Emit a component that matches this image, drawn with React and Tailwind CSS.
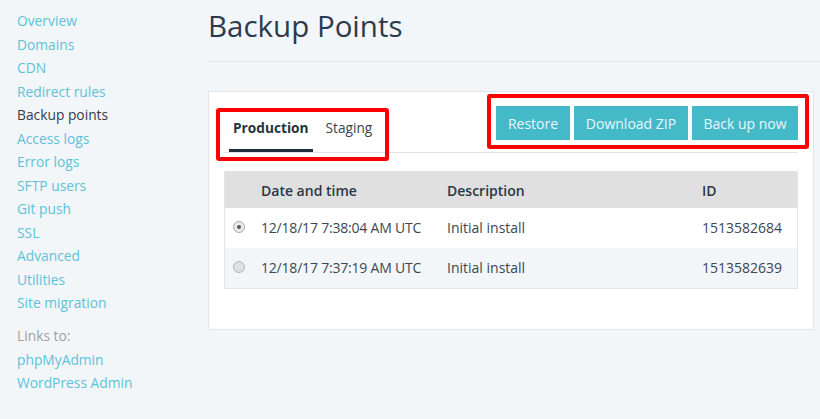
import React from "react";

const links = [
  "Overview",
  "Domains",
  "CDN",
  "Redirect rules",
  "Backup points",
  "Access logs",
  "Error logs",
  "SFTP users",
  "Git push",
  "SSL",
  "Advanced",
  "Utilities",
  "Site migration",
];

function Radio({ checked }) {
  return (
    <span
      className={
        "inline-flex h-[12px] w-[12px] items-center justify-center rounded-full border " +
        (checked
          ? "border-[#a9a9a9] bg-[#e9e9e9]"
          : "border-[#b4b4b4] bg-[#e0e0e0]")
      }
    >
      {checked && <span className="h-[4px] w-[4px] rounded-full bg-[#555]" />}
    </span>
  );
}

export default function App() {
  return (
    <div
      className="flex h-[419px] w-[820px] overflow-hidden bg-[#f3f6f9]"
      style={{ fontFamily: '"Open Sans", "Liberation Sans", sans-serif' }}
    >
      {/* Sidebar */}
      <aside className="w-[208px] shrink-0 pl-[17px] pt-[9px] text-[13.8px] leading-[23.5px]">
        {links.map((l) => (
          <div
            key={l}
            className={l === "Backup points" ? "text-[#333d48]" : "text-[#5cc2d8]"}
          >
            {l}
          </div>
        ))}
        <div className="mt-[9.5px] text-[#a0a0a0]">Links to:</div>
        <div className="text-[#5cc2d8]">phpMyAdmin</div>
        <div className="text-[#5cc2d8]">WordPress Admin</div>
      </aside>

      {/* Main */}
      <main className="flex-1">
        <h1 className="pt-[8px] text-[29.5px] leading-[36px] font-normal text-[#2b3b4c]">
          Backup Points
        </h1>
        <div className="mt-[17px] h-px bg-[#e1e4e7]" />

        <div className="relative mr-[6px] mt-[29px] h-[239px] border border-[#e1e5e8] bg-white px-[15px] pt-[14px]">
          {/* tabs + buttons */}
          <div className="flex items-end justify-between border-b border-[#e3e3e3]">
            <div className="flex pl-[5px]">
              <div className="border-b-[3px] border-[#1f2e38] px-[4px] pb-[11px] text-[13.7px] leading-[20px] font-bold text-[#253441]">
                Production
              </div>
              <div className="ml-[9px] px-[4px] pb-[14px] text-[13.7px] leading-[20px] text-[#3b4650]">
                Staging
              </div>
            </div>
            <div className="mb-[12px] flex gap-[4px]">
              <button className="h-[34px] w-[74px] bg-[#44bac9] text-[14px] text-[#e8f7f9]">
                Restore
              </button>
              <button className="h-[34px] w-[114px] bg-[#44bac9] text-[14px] text-[#e8f7f9]">
                Download ZIP
              </button>
              <button className="h-[34px] w-[106px] bg-[#44bac9] text-[14px] text-[#e8f7f9]">
                Back up now
              </button>
            </div>
          </div>

          {/* table */}
          <div className="mt-[18px] border border-[#e3e6e9] text-[14px]">
            <div className="grid h-[36px] grid-cols-[36px_186px_255px_1fr] items-center bg-[#e0e0e0] font-semibold text-[#2a3845]">
              <div />
              <div>Date and time</div>
              <div>Description</div>
              <div>ID</div>
            </div>
            <div className="grid h-[40px] grid-cols-[36px_186px_255px_1fr] items-center bg-white pb-[2px] text-[#3a4754]">
              <div className="flex pl-[8px]">
                <Radio checked />
              </div>
              <div className="tracking-[-0.2px]">12/18/17 7:38:04 AM UTC</div>
              <div>Initial install</div>
              <div>1513582684</div>
            </div>
            <div className="grid h-[40px] grid-cols-[36px_186px_255px_1fr] items-center bg-[#f3f6f9] pb-[2px] text-[#3a4754]">
              <div className="flex pl-[8px]">
                <Radio />
              </div>
              <div className="tracking-[-0.2px]">12/18/17 7:37:19 AM UTC</div>
              <div>Initial install</div>
              <div>1513582639</div>
            </div>
          </div>

          {/* annotation boxes */}
          <div className="pointer-events-none absolute left-[7px] top-[16px] h-[53px] w-[173px] rounded-[3px] border-[4px] border-[#ff0000]" />
          <div className="pointer-events-none absolute left-[278px] top-[2px] h-[55px] w-[322px] rounded-[3px] border-[4px] border-[#ff0000]" />
        </div>
      </main>
    </div>
  );
}
